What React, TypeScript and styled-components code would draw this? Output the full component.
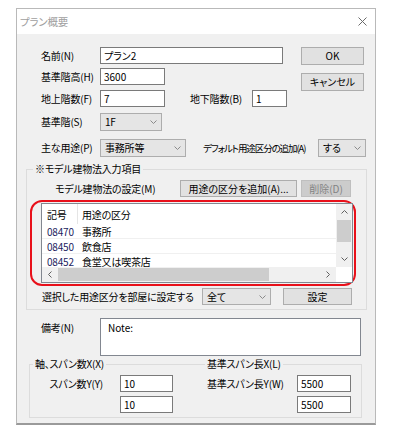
import React from 'react';
import styled, { createGlobalStyle } from 'styled-components';

const GlobalStyle = createGlobalStyle`
  body {
    margin: 0;
    background: #ffffff;
    font-family: "Noto Sans CJK JP", "Noto Sans", sans-serif;
    font-size: 10px;
    font-feature-settings: "palt";
    letter-spacing: -0.2px;
    color: #000;
  }
`;

const Dialog = styled.div`
  box-sizing: border-box;
  margin: 8px 0 0 16px;
  width: 360px;
  height: 417px;
  border: 1px solid #b9b9b9;
  border-bottom: 2px solid #9a9a9a;
  background: #f0f0f0;
  display: flex;
  flex-direction: column;
`;

const TitleBar = styled.div`
  height: 25px;
  flex-shrink: 0;
  background: #fff;
  display: flex;
  align-items: center;
  justify-content: space-between;
  padding: 0 8px 0 3px;
  color: #a0a0a0;
  font-size: 10.5px;
`;

const Body = styled.div`
  flex: 1;
  display: flex;
  flex-direction: column;
`;

const TopArea = styled.div`
  display: flex;
  margin-top: 13px;
  padding-left: 24px;
`;

const Column = styled.div<{ $w?: number }>`
  display: flex;
  flex-direction: column;
  width: ${p => (p.$w ? `${p.$w}px` : 'auto')};
`;

const Row = styled.div<{ $mt?: number; $h?: number; $pl?: number }>`
  display: flex;
  align-items: center;
  height: ${p => p.$h ?? 17}px;
  margin-top: ${p => p.$mt ?? 0}px;
  padding-left: ${p => p.$pl ?? 0}px;
  flex-shrink: 0;
`;

const Label = styled.span<{ $w: number; $ml?: number; $right?: boolean; $tight?: boolean }>`
  width: ${p => p.$w}px;
  margin-left: ${p => p.$ml ?? 0}px;
  flex-shrink: 0;
  white-space: nowrap;
  text-align: ${p => (p.$right ? 'right' : 'left')};
  font-size: ${p => (p.$tight ? '9.5px' : 'inherit')};
  letter-spacing: ${p => (p.$tight ? '-1.1px' : 'inherit')};
  line-height: 14px;
`;

const TextInput = styled.input<{ $w: number; $ml?: number }>`
  box-sizing: border-box;
  width: ${p => p.$w}px;
  height: 17px;
  margin: 0 0 0 ${p => p.$ml ?? 0}px;
  padding: 0 3px;
  border: 1px solid #7a7a7a;
  background: #fff;
  font: inherit;
  font-size: 10px;
  color: #000;
  outline: none;
`;

const Button = styled.button<{ $w: number; $h?: number; $mt?: number; $ml?: number }>`
  box-sizing: border-box;
  width: ${p => p.$w}px;
  height: ${p => p.$h ?? 17}px;
  margin: ${p => p.$mt ?? 0}px 0 0 ${p => p.$ml ?? 0}px;
  padding: 0;
  border: 1px solid #adadad;
  background: #e1e1e1;
  font: inherit;
  font-size: 10px;
  color: #000;
  line-height: 14px;
  &:disabled {
    background: #cccccc;
    border-color: #bfbfbf;
    color: #838383;
  }
`;

const Combo = styled.div<{ $w: number; $h?: number; $ml?: number }>`
  box-sizing: border-box;
  width: ${p => p.$w}px;
  height: ${p => p.$h ?? 18}px;
  margin-left: ${p => p.$ml ?? 0}px;
  border: 1px solid #adadad;
  background: #e5e5e5;
  display: flex;
  align-items: center;
  justify-content: space-between;
  padding: 0 4px 0 4px;
  flex-shrink: 0;
  line-height: 14px;
`;

const GroupBox = styled.div<{ $ml: number; $w: number; $mt: number; $pb: number }>`
  position: relative;
  box-sizing: border-box;
  margin: ${p => p.$mt}px 0 0 ${p => p.$ml}px;
  width: ${p => p.$w}px;
  padding-bottom: ${p => p.$pb}px;
  border: 1px solid #dcdcdc;
  display: flex;
  flex-direction: column;
`;

const Legend = styled.span<{ $x: number }>`
  position: absolute;
  top: -8px;
  left: ${p => p.$x}px;
  padding: 0 2px;
  background: #f0f0f0;
  line-height: 14px;
  white-space: nowrap;
`;

const Highlight = styled.div`
  box-sizing: border-box;
  width: 326px;
  margin: 3px 0 0 3px;
  padding: 1px 1px 1px 9px;
  border: 2px solid #e8101a;
  border-radius: 12px;
`;

const ListBox = styled.div`
  box-sizing: border-box;
  width: 312px;
  height: 80px;
  border: 1px solid #828790;
  background: #fff;
  display: grid;
  grid-template-columns: 1fr 16px;
  grid-template-rows: 1fr 15px;
`;

const ListContent = styled.div`
  overflow: hidden;
`;

const ListRow = styled.div<{ $header?: boolean }>`
  display: grid;
  grid-template-columns: 36px 1fr;
  height: ${p => (p.$header ? 20 : 15)}px;
  border-bottom: ${p => (p.$header ? 'none' : '1px solid #f0f0f0')};
  box-sizing: border-box;
  line-height: 13px;
`;

const Cell = styled.div<{ $code?: boolean; $divider?: boolean }>`
  display: flex;
  align-items: center;
  padding-left: ${p => (p.$code ? 5 : 4)}px;
  color: ${p => (p.$code ? '#1c1c60' : '#000')};
  border-right: ${p => (p.$divider ? '1px solid #e5e5e5' : 'none')};
  white-space: nowrap;
`;

const VScroll = styled.div`
  background: #f0f0f0;
  display: flex;
  flex-direction: column;
`;

const HScroll = styled.div`
  background: #f0f0f0;
  display: flex;
  align-items: stretch;
`;

const ArrowBox = styled.div<{ $w: number; $h: number }>`
  width: ${p => p.$w}px;
  height: ${p => p.$h}px;
  display: flex;
  align-items: center;
  justify-content: center;
  flex-shrink: 0;
`;

const Thumb = styled.div<{ $w?: number; $h?: number }>`
  background: #cdcdcd;
  width: ${p => (p.$w ? `${p.$w}px` : 'auto')};
  height: ${p => (p.$h ? `${p.$h}px` : 'auto')};
  margin: ${p => (p.$w ? '1px 0' : '0 1px')};
  flex-shrink: 0;
`;

const Spacer = styled.div`
  flex: 1;
`;

const Corner = styled.div`
  background: #fff;
`;

const RemarkRow = styled.div`
  display: flex;
  margin-top: 8px;
  padding-left: 24px;
`;

const RemarkArea = styled.textarea`
  box-sizing: border-box;
  width: 261px;
  height: 38px;
  margin: 0;
  padding: 1px 7px;
  border: 1px solid #828790;
  background: #fff;
  font: inherit;
  font-size: 10px;
  resize: none;
  outline: none;
`;

const Chevron = ({ dir, color = '#606060' }: { dir: 'up' | 'down' | 'left' | 'right'; color?: string }) => {
  const pts = {
    down: '0.5,0.5 3.5,3.5 6.5,0.5',
    up: '0.5,3.5 3.5,0.5 6.5,3.5',
    left: '3.5,0.5 0.5,3.5 3.5,6.5',
    right: '0.5,0.5 3.5,3.5 0.5,6.5',
  }[dir];
  const vertical = dir === 'up' || dir === 'down';
  return (
    <svg width={vertical ? 7 : 4} height={vertical ? 4 : 7}>
      <polyline points={pts} fill="none" stroke={color} strokeWidth="1" />
    </svg>
  );
};

const CloseIcon = () => (
  <svg width="9" height="9">
    <path d="M0.5 0.5 L8.5 8.5 M8.5 0.5 L0.5 8.5" stroke="#6b6b6b" strokeWidth="1" fill="none" />
  </svg>
);

const uses = [
  { code: '08470', name: '事務所' },
  { code: '08450', name: '飲食店' },
  { code: '08452', name: '食堂又は喫茶店' },
];

export default function App() {
  return (
    <>
      <GlobalStyle />
      <Dialog>
        <TitleBar>
          <span>プラン概要</span>
          <CloseIcon />
        </TitleBar>
        <Body>
          <TopArea>
            <Column $w={260}>
              <Row>
                <Label $w={59}>名前(N)</Label>
                <TextInput $w={183} defaultValue="プラン2" />
              </Row>
              <Row $mt={4}>
                <Label $w={59}>基準階高(H)</Label>
                <TextInput $w={65} defaultValue="3600" />
              </Row>
              <Row $mt={5}>
                <Label $w={59}>地上階数(F)</Label>
                <TextInput $w={65} defaultValue="7" />
                <Label $w={62} $ml={25}>地下階数(B)</Label>
                <TextInput $w={35} defaultValue="1" />
              </Row>
            </Column>
            <Column>
              <Button $w={63} $h={18}>OK</Button>
              <Button $w={63} $h={18} $mt={8}>キャンセル</Button>
            </Column>
          </TopArea>

          <Row $mt={6} $h={18} $pl={24}>
            <Label $w={59}>基準階(S)</Label>
            <Combo $w={62}>
              <span>1F</span>
              <Chevron dir="down" color="#8a8a8a" />
            </Combo>
          </Row>
          <Row $mt={8} $h={18} $pl={24}>
            <Label $w={59}>主な用途(P)</Label>
            <Combo $w={86}>
              <span>事務所等</span>
              <Chevron dir="down" color="#8a8a8a" />
            </Combo>
            <Label $w={115} $ml={17} $tight>デフォルト用途区分の追加(A)</Label>
            <Combo $w={48}>
              <span>する</span>
              <Chevron dir="down" color="#8a8a8a" />
            </Combo>
          </Row>

          <GroupBox $mt={12} $ml={9} $w={341} $pb={4}>
            <Legend $x={6}>※モデル建物法入力項目</Legend>
            <Row $mt={10} $pl={28}>
              <Label $w={125}>モデル建物法の設定(M)</Label>
              <Button $w={117}>用途の区分を追加(A)...</Button>
              <Button $w={50} $ml={4} disabled>削除(D)</Button>
            </Row>
            <Highlight>
              <ListBox>
                <ListContent>
                  <ListRow $header>
                    <Cell $code $divider style={{ color: '#000' }}>記号</Cell>
                    <Cell>用途の区分</Cell>
                  </ListRow>
                  {uses.map(u => (
                    <ListRow key={u.code}>
                      <Cell $code>{u.code}</Cell>
                      <Cell>{u.name}</Cell>
                    </ListRow>
                  ))}
                </ListContent>
                <VScroll>
                  <ArrowBox $w={16} $h={16}>
                    <Chevron dir="up" />
                  </ArrowBox>
                  <Thumb $h={22} />
                  <Spacer />
                  <ArrowBox $w={16} $h={16}>
                    <Chevron dir="down" />
                  </ArrowBox>
                </VScroll>
                <HScroll>
                  <ArrowBox $w={16} $h={15}>
                    <Chevron dir="left" />
                  </ArrowBox>
                  <Thumb $w={211} />
                  <Spacer />
                  <ArrowBox $w={16} $h={15}>
                    <Chevron dir="right" />
                  </ArrowBox>
                </HScroll>
                <Corner />
              </ListBox>
            </Highlight>
            <Row $mt={2} $pl={15}>
              <Label $w={160}>選択した用途区分を部屋に設定する</Label>
              <Combo $w={69} $h={17}>
                <span>全て</span>
                <Chevron dir="down" color="#8a8a8a" />
              </Combo>
              <Button $w={69} $ml={12}>設定</Button>
            </Row>
          </GroupBox>

          <RemarkRow>
            <Label $w={59} style={{ paddingTop: 3 }}>備考(N)</Label>
            <RemarkArea defaultValue="Note:" />
          </RemarkRow>

          <GroupBox $mt={8} $ml={12} $w={333} $pb={4}>
            <Legend $x={3}>軸、スパン数X(X)</Legend>
            <Legend $x={175}>基準スパン長X(L)</Legend>
            <Row $mt={10}>
              <Label $w={73} $right>スパン数Y(Y)</Label>
              <TextInput $w={53} $ml={17} defaultValue="10" />
              <Label $w={90} $ml={34}>基準スパン長Y(W)</Label>
              <TextInput $w={54} defaultValue="5500" />
            </Row>
            <Row $mt={4} $pl={90}>
              <TextInput $w={53} defaultValue="10" />
              <TextInput $w={54} $ml={124} defaultValue="5500" />
            </Row>
          </GroupBox>
        </Body>
      </Dialog>
    </>
  );
}
